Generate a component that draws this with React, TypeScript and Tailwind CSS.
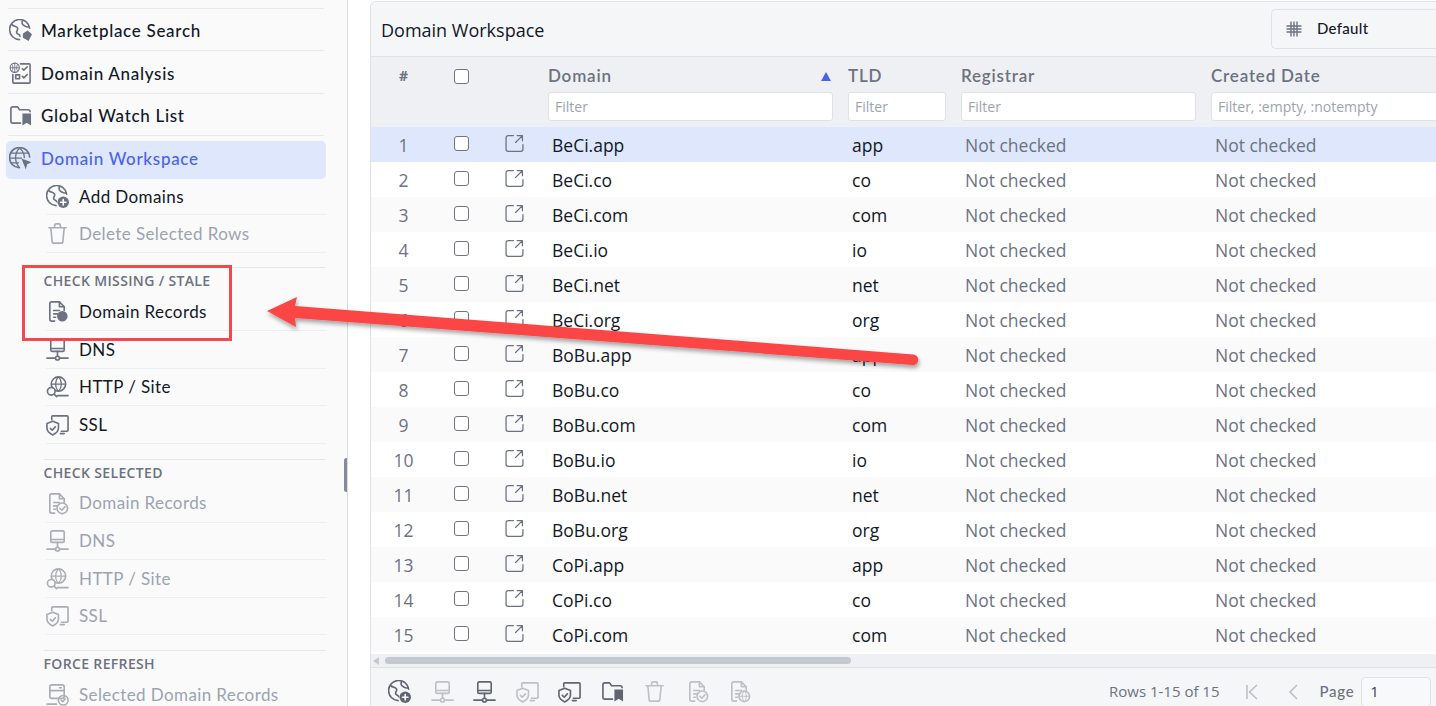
import React from "react";

type IP = { className?: string };
const S = ({ className = "", children, vb = "0 0 24 24" }: IP & { children: React.ReactNode; vb?: string }) => (
  <svg viewBox={vb} fill="none" stroke="currentColor" strokeWidth={1.7} strokeLinecap="round" strokeLinejoin="round" className={className}>
    {children}
  </svg>
);
const GlobeTag = ({ className }: IP) => (
  <S className={className}>
    <path d="M21.500 9.500A10.500 10.500 0 1 0 11 21.500" />
    <path d="M3 6c2.500 2 5 1.500 6 3.500s-2 3-1 5 3 1 3.500 3.500M14 2c-1 2.500 0 4 2 5s2 2 5 1" />
    <path d="M14.500 15l5-3 4.500 4-3.500 7-6-3.500z" fill="currentColor" stroke="none" />
  </S>
);
const GlobePlus = ({ className }: IP) => (
  <S className={className}>
    <path d="M21.500 9.500A10.500 10.500 0 1 0 10.500 21.500" />
    <path d="M3 6c2.500 2 5 1.500 6 3.500s-2 3-1 5 3 1 3 3M14 2c-1 2.500 0 4 2 5s2 2 5 1" />
    <circle cx="18" cy="18" r="6" fill="currentColor" stroke="none" />
    <path d="M18 15.200v5.600M15.200 18h5.600" stroke="#fff" />
  </S>
);
const Analysis = ({ className }: IP) => (
  <S className={className}>
    <circle cx="6" cy="6" r="4.800" strokeWidth={1.100} />
    <path d="M1.500 6h9M6 1.200v9.600M3 2.500c1.500 2 1.500 5 0 7M9 2.500c-1.500 2-1.500 5 0 7" strokeWidth={0.9} />
    <path d="M12 2h9a1 1 0 0 1 1 1v18a1 1 0 0 1-1 1H5a1 1 0 0 1-1-1v-8" />
    <path d="M14 7l1.500 1.500L19 5M14 15l1.500 1.500L19 13" />
    <rect x="7" y="13.500" width="4" height="4" />
  </S>
);
const FolderMark = ({ className }: IP) => (
  <S className={className}>
    <path d="M12 20H4a2 2 0 0 1-2-2V5a2 2 0 0 1 2-2h5l2 3h9a2 2 0 0 1 2 2" />
    <path d="M14 10h9v12.500l-4.500-3-4.500 3z" fill="currentColor" stroke="none" />
  </S>
);
const GlobeCursor = ({ className }: IP) => (
  <S className={className}>
    <path d="M21.500 10.500A10.500 10.500 0 1 0 10.500 21.500" />
    <path d="M1 11.500h12M2 6.500h18.500M2 16.500h8M11 1c-5.500 5.500-5.500 15 0 20.500M11 1c3.500 3 5 6.500 5 10" strokeWidth={1.300} />
    <path d="M13 12l10.500 4-4.500 2-1.500 5.500z" fill="currentColor" stroke="none" />
  </S>
);
const Trash = ({ className }: IP) => (
  <S className={className}>
    <path d="M3 6h18M5 6l1.500 15a1 1 0 0 0 1 1h9a1 1 0 0 0 1-1L19 6M9 6V3.500A1.500 1.500 0 0 1 10.500 2h3A1.500 1.500 0 0 1 15 3.500V6" />
  </S>
);
const Doc = ({ className, mark }: IP & { mark: "dot" | "check" | "globe" }) => (
  <S className={className}>
    <path d="M9 22H6a2 2 0 0 1-2-2V4a2 2 0 0 1 2-2h8l5 5v4" />
    <path d="M14 2v5h5M8 11h6M8 14.500h4M8 18h2" />
    {mark === "dot" ? <circle cx="17" cy="17" r="5.500" fill="currentColor" stroke="none" /> : <circle cx="17" cy="17" r="5.500" />}
    {mark === "check" && <path d="M14.500 17l2 2 3.200-3.500" />}
    {mark === "globe" && <path d="M11.500 17h11M17 11.500c-3 3-3 8 0 11M17 11.500c3 3 3 8 0 11" strokeWidth={1} />}
  </S>
);
const Monitor = ({ className }: IP) => (
  <S className={className}>
    <rect x="5" y="2" width="14" height="12" rx="1.500" />
    <path d="M5 11h14M12 14v5M1 21h8.500M14.500 21H23" />
    <circle cx="12" cy="21" r="2" />
  </S>
);
const GlobeSearch = ({ className }: IP) => (
  <S className={className}>
    <circle cx="13" cy="9.500" r="7.500" />
    <path d="M5.500 9.500h15M13 2c-4 4-4 11 0 15M13 2c4 4 4 11 0 15" strokeWidth={1.200} />
    <circle cx="5.500" cy="17" r="4" fill="#fafafa" />
    <path d="M8.500 20l2.500 2.500M12 21.500h11" />
  </S>
);
const Shield = ({ className }: IP) => (
  <S className={className}>
    <path d="M6 7V4a1 1 0 0 1 1-1h15a1 1 0 0 1 1 1v14a1 1 0 0 1-1 1h-6M15 21.500h4" />
    <path d="M7 8.500l6 2.500v5c0 3.500-3 5.500-6 7-3-1.500-6-3.500-6-7v-5z" />
    <path d="M4.500 16l2 2 3.200-3.500" />
  </S>
);
const ServerDoc = ({ className }: IP) => (
  <S className={className}>
    <rect x="4" y="2" width="15" height="14" rx="2" />
    <path d="M4 8h15M14 5h2M1 22h10" />
    <circle cx="18" cy="18" r="5" />
    <path d="M16 18l1.500 1.500 2.500-3" />
  </S>
);
const OpenIcon = ({ className }: IP) => (
  <S className={className} vb="0 0 18 18">
    <path d="M8 1.500H3A2 2 0 0 0 1 3.500v11a2 2 0 0 0 2 2h12a2 2 0 0 0 2-2V10" strokeWidth={1.200} />
    <path d="M10 8l6.500-6.500M11.500 1.500h5v5" strokeWidth={1.200} />
  </S>
);
const GridIcon = ({ className }: IP) => (
  <S className={className} vb="0 0 16 16">
    <path d="M5 0.500v15M11 0.500v15M0.500 5h15M0.500 11h15" strokeWidth={1.400} strokeLinecap="butt" />
    <path d="M8 0.500v15M0.500 8h15" strokeWidth={1.400} strokeLinecap="butt" />
  </S>
);

const sideFont = "font-['Lato',sans-serif]";

const TopItem = ({ icon, label, active }: { icon: React.ReactNode; label: string; active?: boolean }) => (
  <div className={active ? "flex h-[38px] items-center rounded-[5px] bg-[#dee7fb] pb-[3px] pl-[3px] text-[#4a63e8]" : "mx-[2px] flex h-[42.500px] items-center border-b border-[#e8e9ed] pl-[1px] pt-[3px] text-[#111827]"}>
    <span className="w-[32px] text-[#6b7280]">{icon}</span>
    <span className={`${sideFont} text-[17px] font-medium tracking-[0.7px]`}>{label}</span>
  </div>
);
const SubItem = ({ icon, label, off, h = "h-[37.500px]", cls = "" }: { icon: React.ReactNode; label: string; off?: boolean; h?: string; cls?: string }) => (
  <div className={`ml-[40px] flex ${h} items-center border-b border-[#eceef1] ${cls} ${off ? "text-[#9ca3af]" : "text-[#111827]"}`}>
    <span className={off ? "w-[33px] text-[#a9adb5]" : "w-[33px] text-[#6b7280]"}>{icon}</span>
    <span className={`${sideFont} text-[17px] tracking-[0.4px]`}>{label}</span>
  </div>
);
const Heading = ({ children }: { children: React.ReactNode }) => (
  <div className="ml-[38px] border-t border-[#e5e7eb] pt-[3px] font-['Open_Sans',sans-serif] text-[14px] font-semibold leading-[20px] tracking-[0.35px] text-[#6b7280]">
    <span className="relative left-[-0.500px]">{children}</span>
  </div>
);

const ic = "block h-[23px] w-[23px]";

const Sidebar = () => (
  <aside className="relative h-full w-[348px] shrink-0 overflow-hidden border-r border-[#d9dbe3] bg-[#fafafa] pl-[6px] pr-[21px]">
    <div className="mx-[2px] mt-[7.500px] border-t border-[#e8e9ed]" />
    <TopItem icon={<GlobeTag className={ic} />} label="Marketplace Search" />
    <TopItem icon={<Analysis className={ic} />} label="Domain Analysis" />
    <TopItem icon={<FolderMark className={ic} />} label="Global Watch List" />
    <div className="h-[5px]" />
    <TopItem active icon={<GlobeCursor className={ic} />} label="Domain Workspace" />
    <SubItem icon={<GlobePlus className={ic} />} label="Add Domains" h="h-[36px]" />
    <SubItem off icon={<Trash className={ic} />} label="Delete Selected Rows" h="h-[38px]" />
    <div className="h-[14px]" />
    <Heading>CHECK MISSING / STALE</Heading>
    <div className="h-[2px]" />
    <SubItem icon={<Doc mark="dot" className={ic} />} label="Domain Records" h="h-[38px]" />
    <SubItem icon={<Monitor className={ic} />} label="DNS" />
    <SubItem icon={<GlobeSearch className={ic} />} label="HTTP / Site" />
    <SubItem icon={<Shield className={ic} />} label="SSL" />
    <div className="h-[15px]" />
    <Heading>CHECK SELECTED</Heading>
    <SubItem off icon={<Doc mark="check" className={ic} />} label="Domain Records" h="h-[40px]" cls="pt-[2px]" />
    <SubItem off icon={<Monitor className={ic} />} label="DNS" />
    <SubItem off icon={<GlobeSearch className={ic} />} label="HTTP / Site" />
    <SubItem off icon={<Shield className={ic} />} label="SSL" />
    <div className="h-[15px]" />
    <Heading>FORCE REFRESH</Heading>
    <SubItem off icon={<ServerDoc className={ic} />} label="Selected Domain Records" h="h-[40px]" cls="pt-[2px]" />
    <div className="absolute left-[344px] top-[458px] h-[34px] w-[5px] rounded-[3px] bg-[#858b99]" />
  </aside>
);

const cols = "grid grid-cols-[65px_50px_55px_300px_113px_250px_250px]";
const domains = [
  ["BeCi.app", "app"], ["BeCi.co", "co"], ["BeCi.com", "com"], ["BeCi.io", "io"], ["BeCi.net", "net"], ["BeCi.org", "org"],
  ["BoBu.app", "app"], ["BoBu.co", "co"], ["BoBu.com", "com"], ["BoBu.io", "io"], ["BoBu.net", "net"], ["BoBu.org", "org"],
  ["CoPi.app", "app"], ["CoPi.co", "co"], ["CoPi.com", "com"],
];

const Box = () => <span className="block h-[15px] w-[15px] rounded-[3px] border border-[#70757f] bg-white" />;
const Filter = ({ text = "Filter", cls = "" }: { text?: string; cls?: string }) => (
  <div className={`flex h-[29px] items-center overflow-hidden whitespace-nowrap rounded-[3px] border border-[#dfe1e6] bg-white pl-[6px] text-[14px] text-[#9ca3af] ${cls}`}>{text}</div>
);
const Th = ({ children }: { children: React.ReactNode }) => (
  <div className={`${sideFont} h-[35px] pl-[7px] pt-[7px] text-[17px] font-semibold leading-[24px] tracking-[0.8px] text-[#6b7280]`}>{children}</div>
);

const Table = () => (
  <div className="min-h-0 w-[1083px] flex-none font-['Open_Sans',sans-serif]">
    <div className={`${cols} h-[70px] bg-[#eff0f3]`}>
      <div className="pt-[8px] text-center text-[14px] font-bold text-[#6b7280]">#</div>
      <div className="flex justify-center pt-[12px]"><Box /></div>
      <div />
      <div className="relative">
        <Th>Domain</Th>
        <span className="absolute left-[280px] top-[15px] h-0 w-0 border-x-[5px] border-b-[9px] border-x-transparent border-b-[#4a63e8]" />
        <div className="ml-[7px] mr-[8px]"><Filter /></div>
      </div>
      <div>
        <Th>TLD</Th>
        <div className="ml-[7px] mr-[8px]"><Filter /></div>
      </div>
      <div>
        <Th>Registrar</Th>
        <div className="ml-[7px] mr-[8px]"><Filter /></div>
      </div>
      <div>
        <Th>Created Date</Th>
        <div className="ml-[7px] mr-[8px]"><Filter text="Filter, :empty, :notempty" /></div>
      </div>
    </div>
    {domains.map(([d, t], i) => (
      <div key={d} className={`${cols} h-[35px] items-center text-[17.500px] ${i === 0 ? "bg-[#dee7fb]" : i % 2 === 0 ? "bg-[#fafafa]" : "bg-white"}`}>
        <div className="relative top-[1px] text-center text-[#6b7280]">{i + 1}</div>
        <div className="relative top-[-1.500px] flex justify-center"><Box /></div>
        <div className="flex justify-center pl-[1px] text-[#6b7280]"><OpenIcon className="relative top-[-1.500px] h-[19px] w-[19px]" /></div>
        <div className="relative top-[1px] pl-[11px] text-[#111827]">{d}</div>
        <div className="relative top-[1px] pl-[11px] text-[#111827]">{t}</div>
        <div className="relative top-[1px] pl-[11px] text-[#6b7280]">Not checked</div>
        <div className="relative top-[1px] pl-[11px] text-[#6b7280]">Not checked</div>
      </div>
    ))}
  </div>
);

const tb = "block h-[23px] w-[23px]";
const Footer = () => (
  <div className="flex h-[39px] shrink-0 items-center border-t border-[#e0e2e7] bg-[#f5f6f8] pl-[17px] pt-[9px] font-['Open_Sans',sans-serif]">
    <div className="flex items-center gap-[19.500px]">
      <span className="text-[#5f6571]"><GlobePlus className={tb} /></span>
      <span className="text-[#bcc0c7]"><Monitor className={tb} /></span>
      <span className="text-[#5f6571]"><Monitor className={tb} /></span>
      <span className="text-[#bcc0c7]"><Shield className={tb} /></span>
      <span className="text-[#5f6571]"><Shield className={tb} /></span>
      <span className="text-[#5f6571]"><FolderMark className={tb} /></span>
      <span className="text-[#bcc0c7]"><Trash className={tb} /></span>
      <span className="text-[#bcc0c7]"><Doc mark="check" className={tb} /></span>
      <span className="text-[#bcc0c7]"><Doc mark="globe" className={tb} /></span>
    </div>
    <div className="ml-auto flex w-[327px] shrink-0 items-center text-[15px] text-[#6b7280]">
      <span className="whitespace-nowrap">Rows 1-15 of 15</span>
      <svg viewBox="0 0 14 18" className="ml-[25px] h-[18px] w-[14px]" fill="none" stroke="#b9bdc5" strokeWidth="1.500"><path d="M2 2v14M12 2L4.500 9l7.500 7" /></svg>
      <svg viewBox="0 0 12 18" className="ml-[28px] h-[18px] w-[12px]" fill="none" stroke="#b9bdc5" strokeWidth="1.500"><path d="M10 2L3 9l7 7" /></svg>
      <span className={`${sideFont} ml-[21px] text-[15px] font-medium tracking-[0.7px]`}>Page</span>
      <div className="ml-[7px] flex h-[30px] w-[70px] items-center rounded-[4px] border border-[#dfe1e6] bg-[#f8f9fa] pl-[8px] text-[15px] text-[#374151]">1</div>
    </div>
  </div>
);

const Annotation = () => (
  <>
    <div className="absolute left-[22px] top-[265px] z-10 h-[76px] w-[209.500px] border-[3px] border-[#f04a4a]" />
    <svg className="absolute left-0 top-0 z-10 h-[706px] w-[1436px]" viewBox="0 0 1436 706" fill="none">
      <defs>
        <filter id="sh" x="-5%" y="-30%" width="110%" height="170%">
          <feDropShadow dx="1" dy="3" stdDeviation="2" floodColor="#000" floodOpacity="0.35" />
        </filter>
      </defs>
      <g filter="url(#sh)">
        <path d="M267 311L297 297L295 306L913 354.500A4.500 4.500 0 0 1 913 365L295 318L296 327Z" fill="#fc4444" />
      </g>
    </svg>
  </>
);

export default function App() {
  return (
    <div className="relative flex h-[706px] w-[1436px] overflow-hidden bg-white">
      <Sidebar />
      <main className="ml-[22px] mt-[1px] flex min-w-0 flex-1 flex-col overflow-hidden rounded-tl-[6px] border-l border-t border-[#e0e2e7] bg-white">
        <div className="flex h-[55px] shrink-0 items-center justify-between border-b border-[#e0e2e7] bg-[#f5f6f8] pl-[10px]">
          <span className="relative top-[1px] font-['Open_Sans',sans-serif] text-[18px] font-medium text-[#111827]">Domain Workspace</span>
          <div className="flex h-[40px] w-[165px] shrink-0 items-center rounded-l-[5px] border border-r-0 border-[#e0e2e7] pl-[14px]">
            <GridIcon className="h-[16px] w-[16px] text-[#6b7280]" />
            <span className={`${sideFont} relative top-[-1px] ml-[15px] text-[15px] font-medium tracking-[0.3px] text-[#111827]`}>Default</span>
          </div>
        </div>
        <div className="min-h-0 flex-1 overflow-hidden"><Table /></div>
        <div className="flex h-[13px] shrink-0 items-center bg-[#eff0f3] pl-[2px]">
          <span className="h-0 w-0 border-y-[4px] border-r-[6px] border-y-transparent border-r-[#c4c8d0]" />
          <span className="ml-[6px] h-[7px] w-[466px] rounded-[4px] bg-[#c4c8d0]" />
        </div>
        <Footer />
      </main>
      <Annotation />
    </div>
  );
}
